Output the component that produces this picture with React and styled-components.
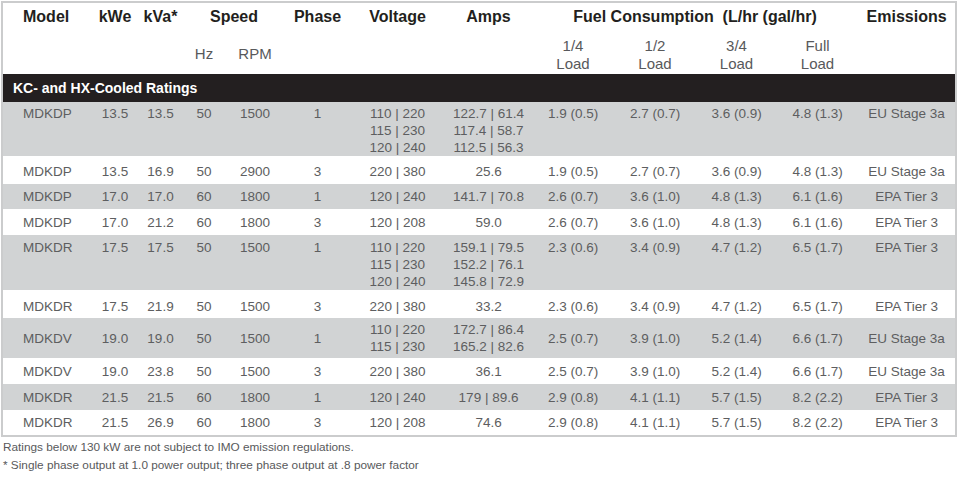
import React from "react";
import styled, { createGlobalStyle } from "styled-components";

const GlobalStyle = createGlobalStyle`
  body {
    margin: 0;
    background: #ffffff;
    font-family: "Liberation Sans", Arial, sans-serif;
  }
`;

const COLS = [89, 46, 45, 42, 60, 65, 95, 87, 82, 82, 81, 81, 97];

const rows = [
  {
    model: "MDKDP", kwe: "13.5", kva: "13.5", hz: "50", rpm: "1500", phase: "1",
    volts: ["110 | 220", "115 | 230", "120 | 240"],
    amps: ["122.7 | 61.4", "117.4 | 58.7", "112.5 | 56.3"],
    fuel: ["1.9 (0.5)", "2.7 (0.7)", "3.6 (0.9)", "4.8 (1.3)"],
    em: "EU Stage 3a", h: 54, align: "top", pad: 3
  },
  {
    model: "MDKDP", kwe: "13.5", kva: "16.9", hz: "50", rpm: "2900", phase: "3",
    volts: ["220 | 380"], amps: ["25.6"],
    fuel: ["1.9 (0.5)", "2.7 (0.7)", "3.6 (0.9)", "4.8 (1.3)"],
    em: "EU Stage 3a", h: 28, align: "middle", pad: 3
  },
  {
    model: "MDKDP", kwe: "17.0", kva: "17.0", hz: "60", rpm: "1800", phase: "1",
    volts: ["120 | 240"], amps: ["141.7 | 70.8"],
    fuel: ["2.6 (0.7)", "3.6 (1.0)", "4.8 (1.3)", "6.1 (1.6)"],
    em: "EPA Tier 3", h: 25, align: "middle", pad: 0
  },
  {
    model: "MDKDP", kwe: "17.0", kva: "21.2", hz: "60", rpm: "1800", phase: "3",
    volts: ["120 | 208"], amps: ["59.0"],
    fuel: ["2.6 (0.7)", "3.6 (1.0)", "4.8 (1.3)", "6.1 (1.6)"],
    em: "EPA Tier 3", h: 26, align: "middle", pad: 0
  },
  {
    model: "MDKDR", kwe: "17.5", kva: "17.5", hz: "50", rpm: "1500", phase: "1",
    volts: ["110 | 220", "115 | 230", "120 | 240"],
    amps: ["159.1 | 79.5", "152.2 | 76.1", "145.8 | 72.9"],
    fuel: ["2.3 (0.6)", "3.4 (0.9)", "4.7 (1.2)", "6.5 (1.7)"],
    em: "EPA Tier 3", h: 55, align: "top", pad: 4
  },
  {
    model: "MDKDR", kwe: "17.5", kva: "21.9", hz: "50", rpm: "1500", phase: "3",
    volts: ["220 | 380"], amps: ["33.2"],
    fuel: ["2.3 (0.6)", "3.4 (0.9)", "4.7 (1.2)", "6.5 (1.7)"],
    em: "EPA Tier 3", h: 28, align: "middle", pad: 4
  },
  {
    model: "MDKDV", kwe: "19.0", kva: "19.0", hz: "50", rpm: "1500", phase: "1",
    volts: ["110 | 220", "115 | 230"], amps: ["172.7 | 86.4", "165.2 | 82.6"],
    fuel: ["2.5 (0.7)", "3.9 (1.0)", "5.2 (1.4)", "6.6 (1.7)"],
    em: "EU Stage 3a", h: 40, align: "middle", pad: 0
  },
  {
    model: "MDKDV", kwe: "19.0", kva: "23.8", hz: "50", rpm: "1500", phase: "3",
    volts: ["220 | 380"], amps: ["36.1"],
    fuel: ["2.5 (0.7)", "3.9 (1.0)", "5.2 (1.4)", "6.6 (1.7)"],
    em: "EU Stage 3a", h: 26, align: "middle", pad: 0
  },
  {
    model: "MDKDR", kwe: "21.5", kva: "21.5", hz: "60", rpm: "1800", phase: "1",
    volts: ["120 | 240"], amps: ["179 | 89.6"],
    fuel: ["2.9 (0.8)", "4.1 (1.1)", "5.7 (1.5)", "8.2 (2.2)"],
    em: "EPA Tier 3", h: 26, align: "middle", pad: 0
  },
  {
    model: "MDKDR", kwe: "21.5", kva: "26.9", hz: "60", rpm: "1800", phase: "3",
    volts: ["120 | 208"], amps: ["74.6"],
    fuel: ["2.9 (0.8)", "4.1 (1.1)", "5.7 (1.5)", "8.2 (2.2)"],
    em: "EPA Tier 3", h: 25, align: "middle", pad: 0
  }
];

const Page = styled.div`
  width: 960px;
  height: 488px;
  box-sizing: border-box;
  padding: 1px 0 0 1px;
  overflow: hidden;
`;

const Table = styled.table`
  width: 956px;
  border: 2px solid #cbcccd;
  border-collapse: separate;
  border-spacing: 0;
  table-layout: fixed;
`;

const HeadRow = styled.tr`
  height: ${({ $h }) => $h}px;
`;

const HeadCell = styled.th`
  padding: 0 0 0 ${({ $indent }) => $indent || 0}px;
  font-size: 16px;
  font-weight: bold;
  color: #231f20;
  text-align: ${({ $left }) => ($left ? "left" : "center")};
  white-space: nowrap;
`;

const SubCell = styled.th`
  padding: ${({ $bottom }) => ($bottom ? "0 0 1px 0" : "4px 0 0 0")};
  font-size: 15px;
  font-weight: normal;
  line-height: 18px;
  color: #58595b;
  text-align: center;
  vertical-align: ${({ $bottom }) => ($bottom ? "bottom" : "middle")};
`;

const Band = styled.td`
  height: 28px;
  padding: 0 0 0 10px;
  background: #231f20;
  color: #ffffff;
  font-size: 14px;
  font-weight: bold;
`;

const Row = styled.tr`
  height: ${({ $h }) => $h}px;
  background: ${({ $shade }) => ($shade ? "#d1d3d4" : "#ffffff")};
`;

const Cell = styled.td`
  padding: ${({ $pad }) => $pad}px 0 0 ${({ $indent }) => $indent || 0}px;
  font-size: 13.5px;
  line-height: 17px;
  color: #5d5e60;
  text-align: ${({ $left }) => ($left ? "left" : "center")};
  vertical-align: ${({ $align }) => $align};
  white-space: nowrap;
`;

const Line = styled.div`
  display: block;
`;

const Notes = styled.div`
  padding: 1px 0 0 2px;
`;

const Note = styled.p`
  margin: 0;
  font-size: 11.8px;
  line-height: 18px;
  color: #58595b;
`;

function Lines({ items }) {
  return items.map((t, i) => <Line key={i}>{t}</Line>);
}

export default function App() {
  return (
    <Page>
      <GlobalStyle />
      <Table>
        <colgroup>
          {COLS.map((w, i) => (
            <col key={i} style={{ width: w }} />
          ))}
        </colgroup>
        <thead>
          <HeadRow $h={27}>
            <HeadCell $left $indent={20}>Model</HeadCell>
            <HeadCell>kWe</HeadCell>
            <HeadCell>kVa*</HeadCell>
            <HeadCell colSpan={2}>Speed</HeadCell>
            <HeadCell>Phase</HeadCell>
            <HeadCell>Voltage</HeadCell>
            <HeadCell>Amps</HeadCell>
            <HeadCell colSpan={4}>Fuel Consumption{"\u00a0"} (L/hr (gal/hr)</HeadCell>
            <HeadCell>Emissions</HeadCell>
          </HeadRow>
          <HeadRow $h={44}>
            <SubCell />
            <SubCell />
            <SubCell />
            <SubCell>Hz</SubCell>
            <SubCell>RPM</SubCell>
            <SubCell />
            <SubCell />
            <SubCell />
            {["1/4", "1/2", "3/4", "Full"].map((f) => (
              <SubCell key={f} $bottom>
                {f}
                <br />
                Load
              </SubCell>
            ))}
            <SubCell />
          </HeadRow>
        </thead>
        <tbody>
          <tr>
            <Band colSpan={13}>KC- and HX-Cooled Ratings</Band>
          </tr>
          {rows.map((r, i) => (
            <Row key={i} $h={r.h} $shade={i % 2 === 0}>
              <Cell $align={r.align} $pad={r.pad} $left $indent={20}>{r.model}</Cell>
              <Cell $align={r.align} $pad={r.pad}>{r.kwe}</Cell>
              <Cell $align={r.align} $pad={r.pad}>{r.kva}</Cell>
              <Cell $align={r.align} $pad={r.pad}>{r.hz}</Cell>
              <Cell $align={r.align} $pad={r.pad}>{r.rpm}</Cell>
              <Cell $align={r.align} $pad={r.pad}>{r.phase}</Cell>
              <Cell $align={r.align} $pad={r.pad}><Lines items={r.volts} /></Cell>
              <Cell $align={r.align} $pad={r.pad}><Lines items={r.amps} /></Cell>
              {r.fuel.map((f, j) => (
                <Cell key={j} $align={r.align} $pad={r.pad}>{f}</Cell>
              ))}
              <Cell $align={r.align} $pad={r.pad}>{r.em}</Cell>
            </Row>
          ))}
        </tbody>
      </Table>
      <Notes>
        <Note>Ratings below 130 kW are not subject to IMO emission regulations.</Note>
        <Note>* Single phase output at 1.0 power output; three phase output at .8 power factor</Note>
      </Notes>
    </Page>
  );
}
